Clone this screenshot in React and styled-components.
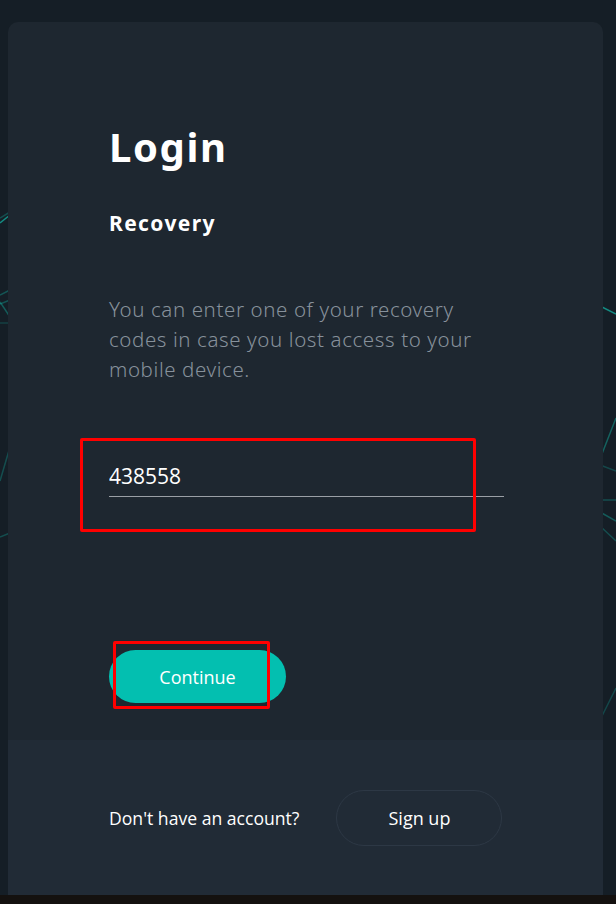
import styled, { createGlobalStyle } from "styled-components";

const Global = createGlobalStyle`
  html, body {
    margin: 0;
    padding: 0;
    background: #151e26;
  }
  * { box-sizing: border-box; }
`;

const Page = styled.div`
  position: relative;
  width: 616px;
  height: 904px;
  display: flex;
  flex-direction: column;
  overflow: hidden;
  background: #151e26;
`;

const Lines = styled.svg`
  position: absolute;
  inset: 0;
  z-index: 0;
`;

const Stage = styled.div`
  position: relative;
  z-index: 1;
  flex: 1;
  display: flex;
  padding: 22px 13px 0 8px;
`;

const Card = styled.div`
  flex: 1;
  display: flex;
  flex-direction: column;
  background: #1e2730;
  border-radius: 10px 10px 0 0;
  overflow: hidden;
`;

const Main = styled.div`
  flex: 1;
  display: flex;
  flex-direction: column;
  align-items: flex-start;
  padding: 101px 90px 0 101px;
`;

const Title = styled.h1`
  margin: 0;
  font-family: "Noto Sans", sans-serif;
  font-weight: 700;
  font-size: 40px;
  line-height: 48px;
  letter-spacing: 1.6px;
  color: #ffffff;
`;

const Subtitle = styled.h2`
  margin: 38px 0 0;
  font-family: "Noto Sans", sans-serif;
  font-weight: 700;
  font-size: 21px;
  line-height: 28px;
  letter-spacing: 1.4px;
  color: #ffffff;
`;

const Text = styled.p`
  margin: 57px 0 0;
  font-family: "Noto Sans", sans-serif;
  font-weight: 300;
  font-size: 20.5px;
  line-height: 30px;
  letter-spacing: 0.6px;
  color: #87919b;
  white-space: nowrap;
`;

const Input = styled.input`
  margin-top: 72px;
  width: 395px;
  height: 41px;
  padding: 0;
  background: transparent;
  border: 0;
  border-bottom: 1px solid #9a9fa5;
  outline: none;
  font-family: "Open Sans", sans-serif;
  font-size: 21px;
  color: #ffffff;
`;

const Primary = styled.button`
  margin-top: 153px;
  width: 177px;
  height: 53px;
  border: 0;
  border-radius: 27px;
  background: #03bfb0;
  color: #ffffff;
  font-family: "Open Sans", sans-serif;
  font-size: 18px;
`;

const Footer = styled.div`
  height: 155px;
  margin-top: 37px;
  display: flex;
  align-items: center;
  gap: 37px;
  padding-left: 101px;
  background: #212b36;
`;

const FooterText = styled.span`
  font-family: "Open Sans", sans-serif;
  font-size: 17.6px;
  color: #ffffff;
`;

const Ghost = styled.button`
  width: 166px;
  height: 56px;
  border: 1.5px solid #2d3845;
  border-radius: 28px;
  background: transparent;
  color: #ffffff;
  font-family: "Open Sans", sans-serif;
  font-size: 18px;
`;

const Taskbar = styled.div`
  position: relative;
  z-index: 1;
  height: 9px;
  background: #14110f;
`;

const Mark = styled.div`
  position: absolute;
  z-index: 2;
  border: 3px solid #ff0000;
  border-radius: 2px;
  left: ${(p) => p.x}px;
  top: ${(p) => p.y}px;
  width: ${(p) => p.w}px;
  height: ${(p) => p.h}px;
`;

const lines = [
  [0, 218, 10, 212, 0.35],
  [0, 223, 10, 215, 0.8],
  [0, 295, 10, 290, 0.4],
  [0, 304, 10, 300, 0.4],
  [0, 302, 10, 317, 0.45],
  [0, 323, 10, 323, 0.25],
  [0, 481, 10, 447, 0.35],
  [0, 537, 10, 533, 0.35],
  [600, 306, 616, 314, 0.8],
  [600, 459, 616, 418, 0.5],
  [600, 465, 616, 471, 0.3],
  [600, 500, 616, 500, 0.35],
  [600, 512, 616, 521, 0.45],
  [600, 526, 616, 541, 0.35],
  [600, 720, 616, 688, 0.3],
];

function App() {
  return (
    <Page>
      <Global />
      <Lines width="616" height="904">
        {lines.map(([x1, y1, x2, y2, o], i) => (
          <line key={i} x1={x1} y1={y1} x2={x2} y2={y2} stroke="#14a79a" strokeOpacity={o} strokeWidth="1.5" />
        ))}
      </Lines>
      <Stage>
        <Card>
          <Main>
            <Title>Login</Title>
            <Subtitle>Recovery</Subtitle>
            <Text>
              You can enter one of your recovery
              <br />
              codes in case you lost access to your
              <br />
              mobile device.
            </Text>
            <Input defaultValue="438558" />
            <Primary>Continue</Primary>
          </Main>
          <Footer>
            <FooterText>Don't have an account?</FooterText>
            <Ghost>Sign up</Ghost>
          </Footer>
        </Card>
      </Stage>
      <Taskbar />
      <Mark x={80} y={438} w={396} h={94} />
      <Mark x={113} y={641} w={157} h={68} />
    </Page>
  );
}

export default App;
